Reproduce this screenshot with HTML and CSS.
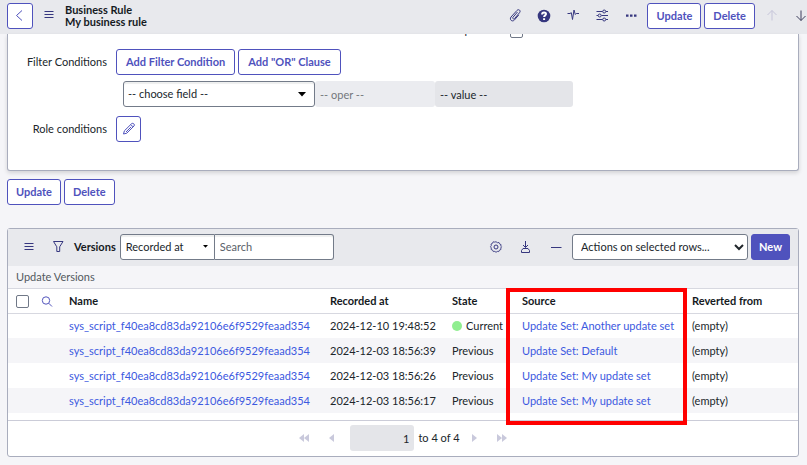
FILE: index.html
```html
<!DOCTYPE html>
<html lang="en">
<head>
<meta charset="utf-8">
<meta name="viewport" content="width=device-width, initial-scale=1">
<title>Business Rule | My business rule</title>
<link rel="stylesheet" href="styles.css">
</head>
<body>
<header class="topbar">
  <button class="btn btn-back" aria-label="Back"><svg class="icon" viewBox="0 0 16 16"><path d="M10 2.500 4.500 7.500l5.500 5"/></svg></button>
  <button class="icon-btn menu-btn" aria-label="Form menu"><svg class="icon" viewBox="0 0 16 16"><path d="M3.500 3.500h9M3.500 6.500h9M3.500 9.500h9"/></svg></button>
  <h1 class="title"><span>Business Rule</span><span>My business rule</span></h1>
  <div class="tools">
    <button class="icon-btn" aria-label="Attachments"><svg class="icon" viewBox="0 0 16 16"><path d="M10.500 4 6 9.200c-1 1.200.6 2.400 1.600 1.300l5-5.900c1.500-2-.9-4-2.600-2.200L4 9c-2 2.700 1.300 5.400 3.500 2.900l4.300-5"/></svg></button>
    <button class="icon-btn" aria-label="Help"><svg class="icon" viewBox="0 0 16 16"><circle class="solid" cx="8" cy="8" r="6.300"/><path class="knock" d="M6.100 6.500c0-2.600 3.900-2.500 3.900-.4 0 1.300-1.900 1.300-1.900 2.900M8.100 10.200v1.700"/></svg></button>
    <button class="icon-btn" aria-label="Activity"><svg class="icon" viewBox="0 0 16 16"><path d="M2.500 5.500H5l1.300-.8 1.200 6.800L9 2l1.300 4.500 1-1H14"/></svg></button>
    <button class="icon-btn" aria-label="Personalize form"><svg class="icon" viewBox="0 0 16 16"><path d="M2.500 3.500h6M12 3.500h2M2.500 7.500h1.500M7.500 7.500H14M2.500 11.500h6M12 11.500h2"/><circle cx="10.200" cy="3.500" r="1.500"/><circle cx="5.700" cy="7.500" r="1.500"/><circle cx="10.200" cy="11.500" r="1.500"/></svg></button>
    <button class="icon-btn" aria-label="More options"><svg class="icon" viewBox="0 0 16 16"><path class="solid" d="M3 6.500h2.500v2.200H3zM7 6.500h2.500v2.200H7zM11 6.500h2.500v2.200H11z"/></svg></button>
  </div>
  <div class="pair">
    <button class="btn">Update</button>
    <button class="btn">Delete</button>
  </div>
  <div class="record-nav">
    <button class="icon-btn faded" aria-label="Previous record"><svg class="icon" viewBox="0 0 16 16"><path d="M8 12.500v-10M3.500 7 8 2.500 12.500 7"/></svg></button>
    <button class="icon-btn dark" aria-label="Next record"><svg class="icon" viewBox="0 0 16 16"><path d="M8 2.500v10M3.500 8 8 12.500 12.500 8"/></svg></button>
  </div>
</header>

<main class="page">
  <form class="card form-card">
    <div class="cut-row">
      <label for="on-update">Update</label>
      <input class="check" id="on-update" type="checkbox">
    </div>
    <div class="field">
      <span class="field-label">Filter Conditions</span>
      <div class="pair">
        <button class="btn btn-wide" type="button">Add Filter Condition</button>
        <button class="btn btn-wide" type="button">Add "OR" Clause</button>
      </div>
    </div>
    <div class="condition">
      <div class="select-box field-select">
        <select class="control" aria-label="Field"><option>-- choose field --</option></select>
        <svg class="caret" viewBox="0 0 10 6"><path d="M0 0h10L5 5.500z"/></svg>
      </div>
      <input class="control blank oper" aria-label="Operator" value="-- oper --" disabled>
      <input class="control blank value" aria-label="Value" value="-- value --" readonly>
    </div>
    <div class="field">
      <span class="field-label">Role conditions</span>
      <button class="btn btn-edit" type="button" aria-label="Edit role conditions"><svg class="icon" viewBox="0 0 16 16"><path d="m2.500 13 .9-3.200 7.300-7.200c1.300-1.100 3.500.9 2.400 2.300l-7.300 7.300zM9.800 3.600l2.300 2.300M5 11l5.200-5.200"/></svg></button>
    </div>
  </form>

  <div class="pair form-actions">
    <button class="btn">Update</button>
    <button class="btn">Delete</button>
  </div>

  <section class="card list">
    <div class="list-bar">
      <button class="icon-btn" aria-label="List menu"><svg class="icon" viewBox="0 0 16 16"><path d="M3.500 4.500h9M3.500 7.500h9M3.500 10.500h9"/></svg></button>
      <button class="icon-btn" aria-label="Filter"><svg class="icon" viewBox="0 0 16 16"><path d="M3.500 2.500h9.500L9.700 7.800v4.700H6.800V7.800z"/></svg></button>
      <h2 class="list-title">Versions</h2>
      <div class="search">
        <div class="select-box search-select">
          <select class="control" aria-label="Search field"><option>Recorded at</option></select>
          <svg class="caret small" viewBox="0 0 10 6"><path d="M0 0h10L5 5.500z"/></svg>
        </div>
        <input class="control search-text" type="text" placeholder="Search" aria-label="Search">
      </div>
      <div class="list-tools">
        <button class="icon-btn" aria-label="List settings"><svg class="icon" viewBox="0 0 16 16"><circle cx="8" cy="8" r="2"/><path d="m8 2.200 1.500 1.100 1.800-.3.700 1.700 1.700.8-.3 1.800L14.300 8l-.9 1.200.2 1.800-1.700.7-.8 1.700-1.700-.2L8 14.200l-1.400-1-1.700.2-.8-1.700-1.700-.7.200-1.800L1.700 8l.9-1.400-.3-1.800L4 4l.7-1.700 1.800.3z" transform="translate(1 .8) scale(.88)"/></svg></button>
        <button class="icon-btn" aria-label="Export"><svg class="icon" viewBox="0 0 16 16"><path d="M7.500 2v6.500M5 6l2.500 2.500L10 6M5 9.500h5l1.500 2v2h-8v-2z"/></svg></button>
        <button class="icon-btn" aria-label="Collapse list"><svg class="icon" viewBox="0 0 16 16"><path d="M3 8.500h10.500"/></svg></button>
      </div>
      <select class="control actions" aria-label="Row actions"><option>Actions on selected rows...</option></select>
      <button class="btn btn-primary">New</button>
    </div>
    <div class="crumb">Update Versions</div>
    <div class="table-wrap">
      <table class="versions">
        <colgroup><col class="c-tick"><col class="c-find"><col class="c-name"><col class="c-date"><col class="c-state"><col class="c-source"><col></colgroup>
        <thead>
          <tr>
            <th><input class="check" type="checkbox" aria-label="Select all"></th>
            <th><button class="icon-btn find" aria-label="Search columns"><svg class="icon" viewBox="0 0 16 16"><circle cx="7" cy="7.500" r="3.700"/><path d="m9.700 10.200 3.300 3.300"/></svg></button></th>
            <th>Name</th><th>Recorded at</th><th>State</th><th>Source</th><th>Reverted from</th>
          </tr>
        </thead>
        <tbody>
          <tr><td></td><td></td><td><a href="#v1">sys_script_f40ea8cd83da92106e6f9529feaad354</a></td><td>2024-12-10 19:48:52</td><td><span class="dot"></span>Current</td><td><a href="#s1">Update Set: Another update set</a></td><td>(empty)</td></tr>
          <tr><td></td><td></td><td><a href="#v2">sys_script_f40ea8cd83da92106e6f9529feaad354</a></td><td>2024-12-03 18:56:39</td><td>Previous</td><td><a href="#s2">Update Set: Default</a></td><td>(empty)</td></tr>
          <tr><td></td><td></td><td><a href="#v3">sys_script_f40ea8cd83da92106e6f9529feaad354</a></td><td>2024-12-03 18:56:26</td><td>Previous</td><td><a href="#s3">Update Set: My update set</a></td><td>(empty)</td></tr>
          <tr><td></td><td></td><td><a href="#v4">sys_script_f40ea8cd83da92106e6f9529feaad354</a></td><td>2024-12-03 18:56:17</td><td>Previous</td><td><a href="#s4">Update Set: My update set</a></td><td>(empty)</td></tr>
        </tbody>
      </table>
      <div class="highlight"></div>
    </div>
    <nav class="pager" aria-label="Pages">
      <button class="page-btn" aria-label="First page"><svg viewBox="0 0 10 8"><path d="M5 0v8L0 4zM10 0v8L5 4z"/></svg></button>
      <button class="page-btn" aria-label="Previous page"><svg viewBox="0 0 10 8"><path d="M7 0v8L2 4z"/></svg></button>
      <input class="control blank page-no" type="text" value="1" aria-label="First row">
      <span class="page-text">to 4 of 4</span>
      <button class="page-btn" aria-label="Next page"><svg viewBox="0 0 10 8"><path d="M3 0v8l5-4z"/></svg></button>
      <button class="page-btn" aria-label="Last page"><svg viewBox="0 0 10 8"><path d="M0 0v8l5-4zM5 0v8l5-4z"/></svg></button>
    </nav>
  </section>
</main>
</body>
</html>
```
FILE: styles.css
```css
* { box-sizing: border-box; }

body {
  margin: 0;
  overflow: hidden;
  background: #f5f5f8;
  color: #20262b;
  font: 11px/16px Lato, "Liberation Sans", sans-serif;
}

button, input, select { font: inherit; color: inherit; margin: 0; }

h1, h2 { margin: 0; font-size: 11px; color: #151a1e; }

a { color: #3c59e0; text-decoration: none; }

.icon {
  display: block;
  width: 16px;
  height: 16px;
  fill: none;
  stroke: currentColor;
  stroke-width: 1;
}
.icon .solid { fill: currentColor; stroke: none; }
.icon .knock { stroke: #fff; stroke-width: 2; }

.icon-btn {
  padding: 0;
  border: 0;
  background: none;
  color: #36377f;
}
.icon-btn.faded { color: #c6c5da; }
.icon-btn.dark { color: #3c3d5c; }

.btn {
  height: 26px;
  padding: 0 8px;
  border: 1px solid #4f52bd;
  border-radius: 3px;
  background: #fff;
  color: #4f52bd;
  font-weight: 700;
  white-space: nowrap;
}
.btn-wide { padding: 0 9px; }
.btn-back { padding: 0 4px; width: 26px; }
.btn-edit { padding: 0 4px; width: 25px; }
.btn-primary { padding: 0 7px; background: #4f52bd; color: #fff; }

.pair { display: flex; gap: 3px; }

.topbar {
  display: flex;
  align-items: center;
  height: 34px;
  padding: 0 0 3px 7px;
  background: #e8e9ed;
}
.menu-btn { margin: 0 8px; }
.title { line-height: 12px; white-space: nowrap; }
.title span { display: block; }
.tools { display: flex; gap: 13px; margin: 0 8px 0 auto; }
.record-nav { display: flex; gap: 13px; margin: 0 -2px 0 9px; }

.page { padding: 0 8px 8px 7px; }

.card {
  border: 1px solid #a9adbd;
  border-radius: 3px;
  background: #fff;
}

.form-card {
  padding-bottom: 28px;
  border-top: 0;
  border-radius: 0 0 3px 3px;
  box-shadow: 0 2px 4px #00000024;
}

.cut-row {
  display: grid;
  grid-template-columns: 484px auto;
  justify-content: start;
  align-content: end;
  align-items: end;
  column-gap: 18px;
  height: 4px;
  overflow: hidden;
  text-align: right;
}

.check {
  display: block;
  appearance: none;
  width: 13px;
  height: 13px;
  border: 1px solid #707887;
  border-radius: 2px;
  background: #fff;
}

.field { display: flex; align-items: center; gap: 9px; }
.cut-row + .field { margin-top: 11px; }
.field-label { width: 99px; text-align: right; }

.condition { display: flex; margin: 6px 0 9px 115px; }

.control {
  height: 26px;
  padding: 0 4px;
  border: 1px solid #737b89;
  border-radius: 3px;
  background: #fff;
}
.control::placeholder { color: #5a6169; opacity: 1; }

.select-box { display: grid; align-items: center; }
.select-box > * { grid-area: 1 / 1; }
.select-box .control { appearance: none; width: 100%; }
.caret {
  justify-self: end;
  width: 8px;
  height: 5px;
  margin-right: 9px;
  pointer-events: none;
}
.caret.small { width: 5px; height: 3px; margin-right: 7px; }

.field-select { width: 192px; }
.field-select .control, .search .control { box-shadow: inset 0 2px 1px #eeefef; }
.search .control { padding: 0 5px; }

.control.blank { border-color: transparent; background: #e4e5e9; }
.control.oper { width: 120px; background: #ebecf0; color: #73777c; }
.control.value { width: 138px; }

.form-actions { margin: 8px 0 23px; }

.list-bar {
  display: flex;
  align-items: center;
  height: 37px;
  padding: 0 8px 2px 13px;
  background: #e8e9ed;
}
.list-bar > .icon-btn + .icon-btn { margin: 0 8px 0 13px; }
.search { display: flex; margin-left: 4px; }
.search-select { width: 95px; }
.search-select .control { border-radius: 3px 0 0 3px; }
.search-text { width: 119px; border-left: 0; border-radius: 0 3px 3px 0; }
.list-tools { display: flex; gap: 14px; margin: 0 8px 0 auto; }
.actions { width: 176px; margin-right: 3px; }

.crumb {
  padding: 3px 8px;
  border-bottom: 1px solid #d7d8e0;
  background: #f5f5f8;
  color: #535960;
}

.table-wrap {
  position: relative;
  padding-bottom: 7px;
  border-bottom: 1px solid #cbccd8;
}

.versions {
  width: 100%;
  border-collapse: collapse;
  table-layout: fixed;
}
.versions th, .versions td {
  height: 25px;
  padding: 0;
  text-align: left;
  white-space: nowrap;
}
.versions th { height: 24px; border-bottom: 1px solid #d7d8e0; color: #151a1e; }
.versions th:first-child { padding: 2px 0 0 8px; }
.versions tbody tr:nth-child(even) { background: #f5f5f8; }
.c-tick { width: 31px; }
.c-find { width: 30px; }
.c-name { width: 261px; }
.c-date { width: 122px; }
.c-state { width: 70px; }
.c-source { width: 170px; }
.find { display: block; color: #5356bd; }

.dot {
  display: inline-block;
  width: 10px;
  height: 10px;
  margin-right: 4px;
  border-radius: 50%;
  background: #90ee90;
  vertical-align: -1px;
}

/* Marks the Source column, over the rows and the rule below them. */
.highlight {
  position: absolute;
  top: -1px;
  bottom: -5px;
  left: 498px;
  width: 181px;
  border: 4px solid #f00;
}

.pager {
  display: flex;
  align-items: center;
  justify-content: center;
  padding: 4px 0 5px;
}
.page-btn { width: 28px; padding: 0; border: 0; background: none; }
.page-btn svg { display: block; width: 10px; height: 8px; margin: auto; fill: #c9c9dc; }
.page-no { width: 64px; margin: 0 4px; text-align: right; }
```
